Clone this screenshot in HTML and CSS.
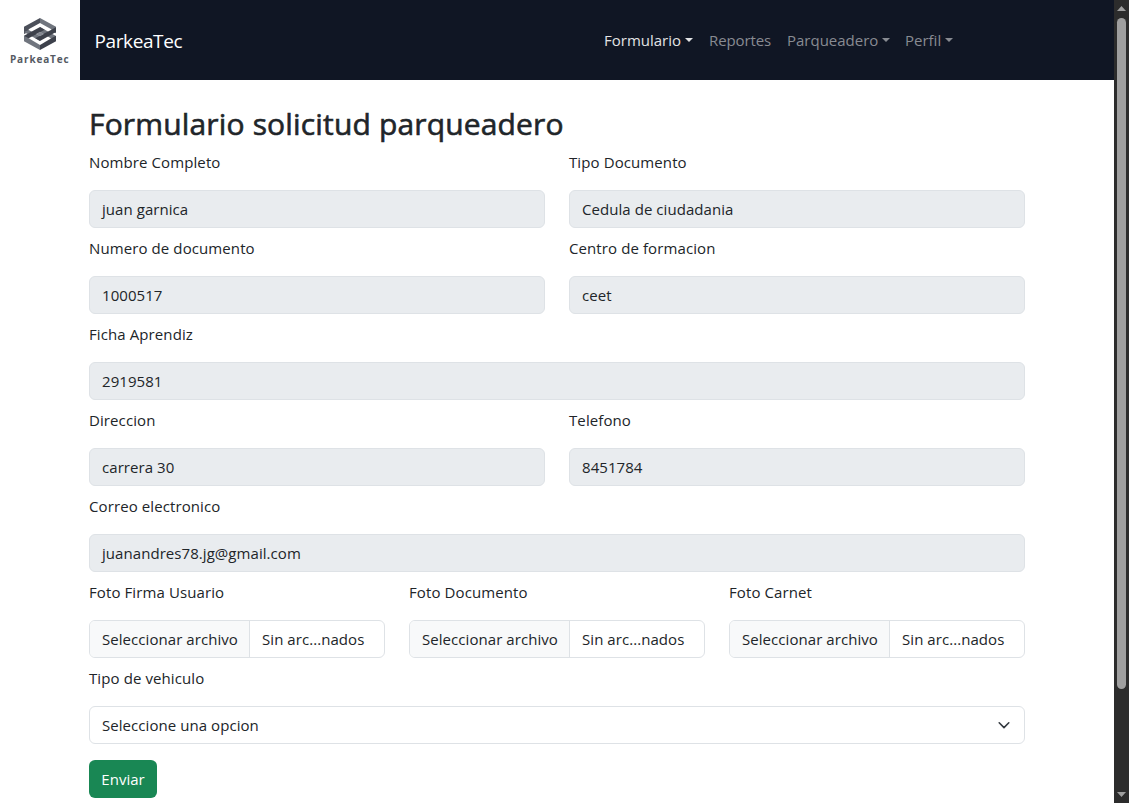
FILE: index.html
```html
<!DOCTYPE html>
<html lang="es">
<head>
<meta charset="utf-8">
<title>ParkeaTec</title>
<link rel="stylesheet" href="styles.css">
</head>
<body>
<div class="page">
  <header class="navbar">
    <div class="logo">
      <svg class="logo-mark" width="32" height="32" viewBox="0 0 96 96">
        <path fill="#4c505a" d="M0 26 48 0V15L14 34V42L0 48Z"/>
        <path fill="#70757e" d="M48 0 96 26V46L82 40V34L48 15Z"/>
        <path fill="#70757e" d="M48 27 96 54V70L48 42Z"/>
        <path fill="#70757e" d="M0 42 48 69V54L14 36Z"/>
        <path fill="#3d414b" d="M0 53 48 27 62 35 14 61 0 69Z"/>
        <path fill="#3d414b" d="M96 42 48 69 34 61 82 35 96 28Z"/>
        <path fill="#858992" d="M48 41 60 48 48 55 36 48Z"/>
        <path fill="#70757e" d="M0 53 14 61 48 81V96L0 70Z"/>
        <path fill="#3d414b" d="M96 53 82 61 48 81V96L96 70Z"/>
      </svg>
      <span class="logo-text">ParkeaTec</span>
    </div>
    <span class="brand">ParkeaTec</span>
    <nav class="menu">
      <a class="link active w-formulario caret">Formulario</a>
      <a class="link w-reportes">Reportes</a>
      <a class="link w-parqueadero caret">Parqueadero</a>
      <a class="link caret">Perfil</a>
    </nav>
  </header>
  <main class="container">
    <h2 class="title">Formulario solicitud parqueadero</h2>
    <form class="grid">
      <div class="field half"><label>Nombre Completo</label><div class="control disabled">juan garnica</div></div>
      <div class="field half"><label>Tipo Documento</label><div class="control disabled">Cedula de ciudadania</div></div>
      <div class="field half"><label>Numero de documento</label><div class="control disabled">1000517</div></div>
      <div class="field half"><label>Centro de formacion</label><div class="control disabled">ceet</div></div>
      <div class="field full"><label>Ficha Aprendiz</label><div class="control disabled">2919581</div></div>
      <div class="field half"><label>Direccion</label><div class="control disabled">carrera 30</div></div>
      <div class="field half"><label>Telefono</label><div class="control disabled">8451784</div></div>
      <div class="field full"><label>Correo electronico</label><div class="control disabled">juanandres78.jg@gmail.com</div></div>
      <div class="field third"><label>Foto Firma Usuario</label><div class="control file"><span class="pick">Seleccionar archivo</span><span class="name">Sin arc...nados</span></div></div>
      <div class="field third"><label>Foto Documento</label><div class="control file"><span class="pick">Seleccionar archivo</span><span class="name">Sin arc...nados</span></div></div>
      <div class="field third"><label>Foto Carnet</label><div class="control file"><span class="pick">Seleccionar archivo</span><span class="name">Sin arc...nados</span></div></div>
      <div class="field full"><label>Tipo de vehiculo</label><div class="control select"><span>Seleccione una opcion</span><svg width="16" height="12" viewBox="0 0 16 12"><path fill="none" stroke="#343a40" stroke-linecap="round" stroke-linejoin="round" stroke-width="1.6" d="m3.2 3.8 4.8 4.8 4.8-4.8"/></svg></div></div>
    </form>
    <button class="submit" type="button">Enviar</button>
  </main>
</div>
<aside class="scrollbar">
  <svg width="9" height="5" viewBox="0 0 9 5"><path fill="#9f9f9f" d="M0 5 4.5 0 9 5Z"/></svg>
  <div class="thumb"></div>
  <svg class="down" width="9" height="5" viewBox="0 0 9 5"><path fill="#9f9f9f" d="M0 0 4.5 5 9 0Z"/></svg>
</aside>
</body>
</html>
```
FILE: styles.css
```css
* { box-sizing: border-box; }
body {
  margin: 0;
  height: 803px;
  display: flex;
  overflow: hidden;
  background: #fff;
  color: #212529;
  font: 15px/24px "Open Sans", sans-serif;
}
.page { flex: 1; min-width: 0; }
.navbar {
  height: 80px;
  display: flex;
  align-items: center;
  background: #101624;
}
.logo {
  width: 79.5px;
  height: 80px;
  padding-top: 18px;
  display: flex;
  flex-direction: column;
  align-items: center;
  background: #fff;
}
.logo-mark { display: block; }
.logo-text {
  margin-top: 3px;
  font: 700 10px/12px "Open Sans", sans-serif;
  letter-spacing: 0.85px;
  color: #555a63;
}
.brand {
  width: 508.5px;
  padding-left: 15px;
  font-size: 19px;
  line-height: 30px;
  letter-spacing: -0.4px;
  color: #fff;
  padding-top: 2px;
}
.menu { display: flex; }
.link {
  padding-left: 16px;
  margin-top: -1px;
  white-space: nowrap;
  color: #888b92;
}
.active { color: #e2e3e5; }
.w-formulario { width: 105px; }
.w-reportes { width: 78px; letter-spacing: -0.1px; }
.w-parqueadero { width: 118px; }
.caret::after {
  content: "";
  display: inline-block;
  margin-left: 4px;
  vertical-align: 4px;
  border: 4.5px solid transparent;
  border-top-color: currentColor;
  border-bottom: 0;
}
.container { width: 936px; margin: 0 auto; padding-top: 25px; }
.title {
  margin: 0 0 7px;
  font-size: 30px;
  font-weight: 500;
  line-height: 38px;
  letter-spacing: 0.16px;
  -webkit-text-stroke: 0.6px currentColor;
  white-space: nowrap;
}
.grid {
  display: grid;
  grid-template-columns: repeat(6, 1fr);
  gap: 8px 24px;
}
.half { grid-column: span 3; }
.third { grid-column: span 2; }
.full { grid-column: span 6; }
.field label { display: block; margin-bottom: 16px; letter-spacing: 0.1px; }
.control {
  height: 38px;
  display: flex;
  align-items: center;
  padding: 0 12px;
  border: 1px solid #dee2e6;
  border-radius: 6px;
  background: #fff;
  letter-spacing: 0.06px;
  white-space: nowrap;
}
.disabled { background: #e9ecef; }
.file { padding: 0; overflow: hidden; }
.pick {
  width: 160px;
  height: 36px;
  padding-left: 12px;
  line-height: 36px;
  background: #f8f9fa;
  border-right: 1px solid #dee2e6;
}
.name { padding-left: 12px; }
.select { justify-content: space-between; }
.submit {
  width: 68px;
  height: 38px;
  margin-top: 16px;
  padding: 0;
  display: block;
  border: 0;
  border-radius: 6px;
  background: #198754;
  color: #fff;
  font: inherit;
}
.scrollbar {
  width: 15px;
  height: 803px;
  padding: 6px 0;
  display: flex;
  flex-direction: column;
  align-items: center;
  background: #2c2c2c;
}
.thumb {
  width: 9px;
  height: 671px;
  margin-top: 7px;
  border-radius: 5px;
  background: #9f9f9f;
}
.down { margin-top: auto; }
```
